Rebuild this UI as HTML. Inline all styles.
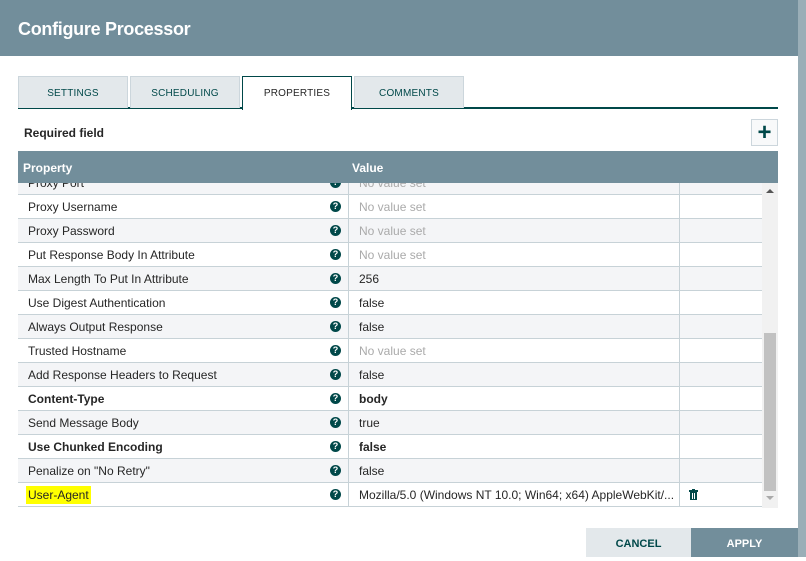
<!DOCTYPE html>
<html><head><meta charset="utf-8"><style>
*{box-sizing:border-box;margin:0;padding:0}
body{width:806px;height:557px;overflow:hidden;background:#fff;font-family:"Liberation Sans",sans-serif;position:relative}
.strip{position:absolute;left:798px;top:0;width:8px;height:557px;background:#9aaeb7}
.hdr{position:absolute;left:0;top:0;width:798px;height:56px;background:#728e9b;color:#fff;font-weight:bold;font-size:18px;padding:19px 0 0 18px;letter-spacing:-.3px}
.tabline{position:absolute;left:18px;top:107px;width:760px;height:2px;background:#004849}
.tab{position:absolute;top:76px;height:32px;background:#e3e8eb;border:1px solid #ccd6dc;border-bottom:none;font-size:10px;color:#004849;text-align:center;line-height:33px;letter-spacing:.2px}
.tab.act{background:#fff;border:1px solid #004849;border-bottom:none;height:34px;color:#262626}
.req{position:absolute;left:24px;top:126px;font-size:12px;font-weight:bold;color:#262626}
.plus{position:absolute;left:751px;top:119px;width:27px;height:27px;border:1px solid #ccd6dc;background:#f8f9fa;color:#004849;font-size:24px;font-weight:bold;text-align:center;line-height:25px}
.th{position:absolute;left:18px;top:151px;width:760px;height:32px;background:#728e9b;color:#fff;font-weight:bold;font-size:12px;z-index:2}
.th span{position:absolute;top:10px}
.rows{position:absolute;left:18px;top:171px;width:744px;height:337px;overflow:hidden}
.row{position:absolute;left:0;width:744px;height:24px;border-bottom:1px solid #c7d2d7;font-size:12px;color:#262626}
.row.g{background:#f4f5f7}
.row .p{position:absolute;left:10px;top:5px}
.row .v{position:absolute;left:341px;top:5px;white-space:nowrap}
.row .nv{color:#aaa}
.row .c1{position:absolute;left:330px;top:0;width:1px;height:24px;background:#c7d2d7}
.row .c2{position:absolute;left:661px;top:0;width:1px;height:24px;background:#c7d2d7}
.q{position:absolute;left:312px;top:6px;width:11px;height:11px;border-radius:50%;background:#004849;color:#fff;font-size:9px;font-weight:bold;text-align:center;line-height:11px}
.b{font-weight:bold}
.sb{position:absolute;left:762px;top:183px;width:16px;height:325px;background:#f1f1f1}
.thumb{position:absolute;left:2px;top:150px;width:12px;height:158px;background:#c1c1c1}
.btn{position:absolute;top:528px;height:29px;font-size:11px;font-weight:bold;text-align:center;line-height:33px}
</style></head><body>
<div class="strip"></div>
<div class="hdr">Configure Processor</div>
<div class="tabline"></div>
<div class="tab" style="left:18px;width:110px">SETTINGS</div>
<div class="tab" style="left:130px;width:110px">SCHEDULING</div>
<div class="tab act" style="left:242px;width:110px">PROPERTIES</div>
<div class="tab" style="left:354px;width:110px">COMMENTS</div>
<div class="req">Required field</div>
<div class="plus">+</div>
<div class="th"><span style="left:5px">Property</span><span style="left:334px">Value</span></div>
<div class="rows">
<div class="row g" style="top:0"><span class="p">Proxy Port</span><span class="q">?</span><span class="c1"></span><span class="v nv">No value set</span><span class="c2"></span></div>
<div class="row" style="top:24px"><span class="p">Proxy Username</span><span class="q">?</span><span class="c1"></span><span class="v nv">No value set</span><span class="c2"></span></div>
<div class="row g" style="top:48px"><span class="p">Proxy Password</span><span class="q">?</span><span class="c1"></span><span class="v nv">No value set</span><span class="c2"></span></div>
<div class="row" style="top:72px"><span class="p">Put Response Body In Attribute</span><span class="q">?</span><span class="c1"></span><span class="v nv">No value set</span><span class="c2"></span></div>
<div class="row g" style="top:96px"><span class="p">Max Length To Put In Attribute</span><span class="q">?</span><span class="c1"></span><span class="v">256</span><span class="c2"></span></div>
<div class="row" style="top:120px"><span class="p">Use Digest Authentication</span><span class="q">?</span><span class="c1"></span><span class="v">false</span><span class="c2"></span></div>
<div class="row g" style="top:144px"><span class="p">Always Output Response</span><span class="q">?</span><span class="c1"></span><span class="v">false</span><span class="c2"></span></div>
<div class="row" style="top:168px"><span class="p">Trusted Hostname</span><span class="q">?</span><span class="c1"></span><span class="v nv">No value set</span><span class="c2"></span></div>
<div class="row g" style="top:192px"><span class="p">Add Response Headers to Request</span><span class="q">?</span><span class="c1"></span><span class="v">false</span><span class="c2"></span></div>
<div class="row" style="top:216px"><span class="p b">Content-Type</span><span class="q">?</span><span class="c1"></span><span class="v b">body</span><span class="c2"></span></div>
<div class="row g" style="top:240px"><span class="p">Send Message Body</span><span class="q">?</span><span class="c1"></span><span class="v">true</span><span class="c2"></span></div>
<div class="row" style="top:264px"><span class="p b">Use Chunked Encoding</span><span class="q">?</span><span class="c1"></span><span class="v b">false</span><span class="c2"></span></div>
<div class="row g" style="top:288px"><span class="p">Penalize on "No Retry"</span><span class="q">?</span><span class="c1"></span><span class="v">false</span><span class="c2"></span></div>
<div class="row" style="top:312px"><span class="p" style="background:#ffff00;left:8px;padding:0 2px;top:3px;height:18px;line-height:18px">User-Agent</span><span class="q">?</span><span class="c1"></span><span class="v">Mozilla/5.0 (Windows NT 10.0; Win64; x64) AppleWebKit/...</span><span class="c2"></span>
<svg style="position:absolute;left:671px;top:6px" width="9" height="11" viewBox="0 0 9 11"><rect x="0" y="1" width="9" height="2" fill="#004849"/><rect x="3" y="0" width="3" height="1" fill="#004849"/><rect x="1" y="3" width="7" height="8" fill="#004849"/><rect x="3" y="4" width="1" height="6" fill="#fff"/><rect x="5" y="4" width="1" height="6" fill="#fff"/></svg></div>
</div>
<div class="sb"><div style="position:absolute;left:4px;top:6px;border:4px solid transparent;border-bottom:4px solid #555;border-top:none"></div><div class="thumb"></div><div style="position:absolute;left:4px;top:313px;border:4px solid transparent;border-top:4px solid #aaa;border-bottom:none"></div></div>
<div class="btn" style="left:586px;width:105px;background:#e3e8eb;color:#004849">CANCEL</div>
<div class="btn" style="left:691px;width:107px;background:#728e9b;color:#fff">APPLY</div>
</body></html>
